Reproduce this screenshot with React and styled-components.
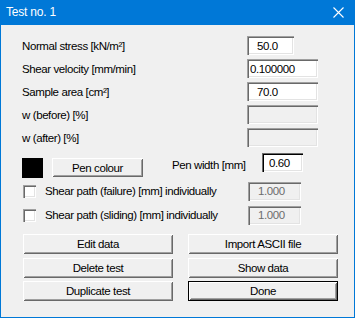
import React from 'react'
import styled, { createGlobalStyle } from 'styled-components'

const GlobalStyle = createGlobalStyle`
  body {
    margin: 0;
    font-family: "Liberation Sans", Arial, sans-serif;
  }
`

const Window = styled.div`
  width: 355px;
  height: 318px;
  box-sizing: border-box;
  border: 1px solid #0078d7;
  border-top: none;
  background: #f0f0f0;
  display: flex;
  flex-direction: column;
`

const TitleBar = styled.div`
  height: 25px;
  margin: 0 -1px;
  background: #0078d7;
  display: flex;
  align-items: center;
  justify-content: space-between;
  padding: 0 11px 0 6px;
  color: #fff;
  font-size: 12px;
  letter-spacing: -0.2px;
  flex-shrink: 0;
`

const TitleText = styled.span`
  line-height: 25px;
`

const Body = styled.div`
  padding: 11px 0 0 21px;
  display: flex;
  flex-direction: column;
  font-size: 11.5px;
  letter-spacing: -0.4px;
  color: #000;
`

const Fields = styled.div`
  display: flex;
  flex-direction: column;
  gap: 4px;
`

const Row = styled.div`
  display: flex;
  align-items: center;
  height: ${(p) => p.$height || 19}px;
`

const Label = styled.span`
  width: ${(p) => p.$width || 225}px;
  flex-shrink: 0;
  white-space: nowrap;
`

const Field = styled.input`
  box-sizing: border-box;
  width: ${(p) => p.$width}px;
  height: 19px;
  margin: 0;
  padding: 0 0 0 ${(p) => p.$indent || 3}px;
  border: none;
  outline: none;
  font: inherit;
  letter-spacing: inherit;
  background: ${(p) => (p.disabled ? '#f0f0f0' : '#fff')};
  color: ${(p) => (p.disabled ? '#6d6d6d' : '#000')};
  -webkit-text-fill-color: ${(p) => (p.disabled ? '#6d6d6d' : '#000')};
  box-shadow:
    inset 1px 1px ${(p) => (p.$focused ? '#696969' : '#a0a0a0')},
    inset 2px 2px ${(p) => (p.$focused ? '#000' : '#696969')},
    inset -1px -1px #fff,
    inset -2px -2px #e3e3e3;
`

const PenRow = styled.div`
  display: flex;
  align-items: flex-start;
  height: 25px;
  margin-top: 6px;
`

const Swatch = styled.div`
  width: 21px;
  height: 20px;
  margin-top: 5px;
  background: #000;
  flex-shrink: 0;
`

const Button = styled.button`
  box-sizing: border-box;
  width: ${(p) => p.$width || 150}px;
  height: ${(p) => p.$height || 20}px;
  margin: 0;
  padding: 0;
  font: inherit;
  letter-spacing: inherit;
  color: #000;
  background: #f0f0f0;
  border: ${(p) => (p.$default ? '1px solid #000' : 'none')};
  box-shadow:
    inset 1px 1px #fff,
    inset -1px -1px #696969,
    inset 2px 2px #f0f0f0,
    inset -2px -2px #a0a0a0;
`

const PenButton = styled(Button)`
  margin: 5px 29px 0 9px;
`

const PenLabel = styled.span`
  width: 90px;
  line-height: 25px;
`

const CheckRows = styled.div`
  display: flex;
  flex-direction: column;
  gap: 4px;
  margin-top: 3px;
`

const Check = styled.span`
  box-sizing: border-box;
  width: 13px;
  height: 13px;
  background: #fff;
  margin: 0 9px 0 1px;
  flex-shrink: 0;
  box-shadow:
    inset 1px 1px #a0a0a0,
    inset 2px 2px #696969,
    inset -1px -1px #fff,
    inset -2px -2px #e3e3e3;
`

const ButtonGrid = styled.div`
  display: grid;
  grid-template-columns: 150px 150px;
  column-gap: 15px;
  row-gap: 3.5px;
  margin-top: 9px;
  padding-left: 1px;
`

function CloseIcon () {
  return (
    <svg width="11" height="11" viewBox="0 0 11 11">
      <path d="M0.5 0.5 L10.5 10.5 M10.5 0.5 L0.5 10.5" stroke="#fff" strokeWidth="1.1" />
    </svg>
  )
}

const fields = [
  { label: 'Normal stress [kN/m²]', value: '50.0', width: 47, indent: 10 },
  { label: 'Shear velocity [mm/min]', value: '0.100000', width: 71, indent: 3 },
  { label: 'Sample area [cm²]', value: '70.0', width: 71, indent: 10 },
  { label: 'w (before) [%]', value: '', width: 71, disabled: true },
  { label: 'w (after) [%]', value: '', width: 71, disabled: true }
]

const checks = [
  'Shear path (failure) [mm] individually',
  'Shear path (sliding) [mm] individually'
]

const buttons = [
  'Edit data', 'Import ASCII file',
  'Delete test', 'Show data',
  'Duplicate test', 'Done'
]

export default function App () {
  return (
    <>
      <GlobalStyle />
      <Window>
        <TitleBar>
          <TitleText>Test no. 1</TitleText>
          <CloseIcon />
        </TitleBar>
        <Body>
          <Fields>
            {fields.map((item) => (
              <Row key={ item.label }>
                <Label>{ item.label }</Label>
                <Field
                  readOnly
                  value={ item.value }
                  disabled={ item.disabled }
                  $width={ item.width }
                  $indent={ item.indent }
                />
              </Row>
            ))}
          </Fields>
          <PenRow>
            <Swatch />
            <PenButton $width={ 91 } $height={ 19 }>Pen colour</PenButton>
            <PenLabel>Pen width [mm]</PenLabel>
            <Field readOnly value="0.60" $width={ 41 } $indent={ 7 } $focused />
          </PenRow>
          <CheckRows>
            {checks.map((text) => (
              <Row key={ text } $height={ 20 }>
                <Check />
                <Label $width={ 203 }>{ text }</Label>
                <Field readOnly disabled value="1.000" $width={ 53 } $indent={ 10 } />
              </Row>
            ))}
          </CheckRows>
          <ButtonGrid>
            {buttons.map((text) => (
              <Button key={ text } $default={ text === 'Done' }>{ text }</Button>
            ))}
          </ButtonGrid>
        </Body>
      </Window>
    </>
  )
}
